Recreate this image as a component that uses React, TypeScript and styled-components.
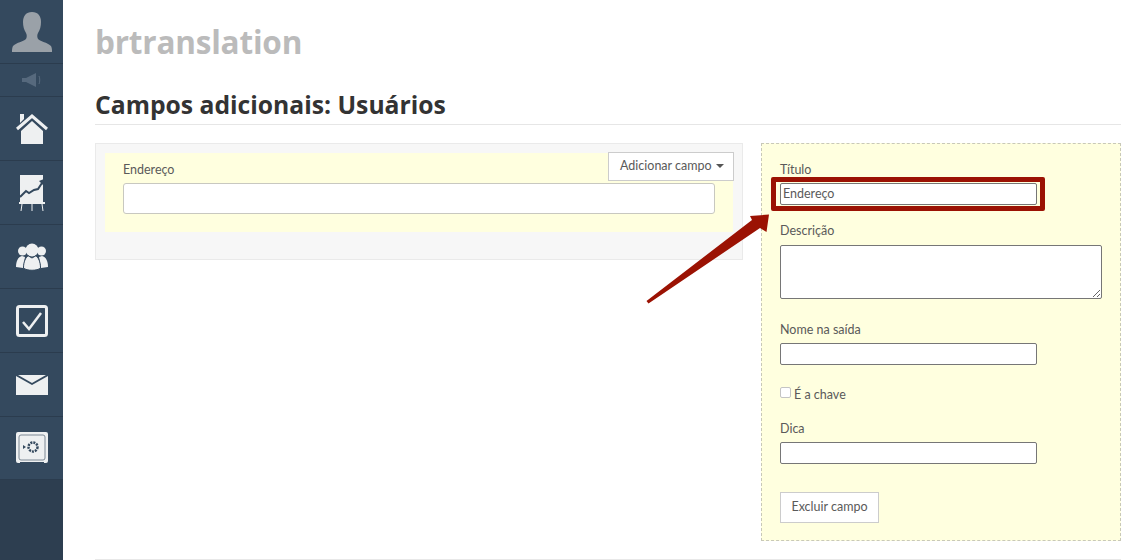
import React from 'react';
import styled, { createGlobalStyle } from 'styled-components';

const BODY_FONT = `12.5px Lato, "Liberation Sans", Arial, sans-serif`;

const GlobalStyle = createGlobalStyle`
  html, body {
    margin: 0;
    height: 100%;
    background: #fff;
    overflow: hidden;
  }
  * {
    box-sizing: border-box;
  }
  body {
    font: ${BODY_FONT};
    color: #5a5a5a;
  }
`;

const Page = styled.div`
  display: flex;
  position: relative;
  width: 1133px;
  height: 560px;
  overflow: hidden;
`;

const Sidebar = styled.aside`
  width: 63px;
  flex-shrink: 0;
  background: #2d3e50;
`;

const SideRow = styled.div<{ $height: number }>`
  display: flex;
  align-items: center;
  justify-content: center;
  height: ${({ $height }) => $height}px;
  background: #34495e;
  border-bottom: 1px solid #2b3c4e;
`;

const Main = styled.main`
  flex: 1;
  padding: 0 12px 0 32px;
`;

const Brand = styled.h1`
  margin: 0;
  padding-top: 22px;
  height: 78px;
  font-family: "Open Sans", "Liberation Sans", sans-serif;
  font-size: 31.5px;
  line-height: 39px;
  font-weight: 700;
  letter-spacing: -0.2px;
  color: #bbb;
`;

const TitleBar = styled.div`
  height: 47px;
  border-bottom: 1px solid #e6e6e6;
`;

const Title = styled.h2`
  margin: 0;
  padding-top: 13px;
  font-family: "Open Sans", "Liberation Sans", sans-serif;
  font-size: 24.7px;
  line-height: 27px;
  font-weight: 700;
  color: #333;
`;

const Columns = styled.div`
  display: flex;
  justify-content: space-between;
  align-items: flex-start;
  margin-top: 18px;
  height: 398px;
`;

const FormPreview = styled.section`
  position: relative;
  width: 648px;
  height: 117px;
  padding: 9px;
  background: #f7f7f7;
  border: 1px solid #eaeaea;
`;

const PreviewField = styled.div`
  height: 79px;
  padding: 7px 18px 0;
  background: #ffffdf;
`;

const Label = styled.label`
  display: block;
  height: 20px;
  line-height: 20px;
`;

const PreviewInput = styled.input`
  display: block;
  width: 592px;
  height: 31px;
  margin-top: 3px;
  background: #fff;
  border: 1px solid #c8c8c0;
  border-radius: 3px;
  outline: none;
`;

const AddButton = styled.button`
  position: absolute;
  top: 8px;
  right: 8px;
  display: flex;
  align-items: center;
  gap: 4px;
  width: 126px;
  height: 29px;
  padding: 0 0 2px 11px;
  font: ${BODY_FONT};
  color: #5a5a5a;
  background: #fff;
  border: 1px solid #ccc;
`;

const Caret = styled.span`
  width: 0;
  height: 0;
  border-top: 4px solid #555;
  border-left: 4px solid transparent;
  border-right: 4px solid transparent;
`;

const Editor = styled.section`
  width: 360px;
  height: 398px;
  padding: 16px 18px;
  background: #ffffdf;
  border: 1px dashed #c8c8b8;
`;

const EditorField = styled.div<{ $gap: number }>`
  margin-bottom: ${({ $gap }) => $gap}px;
`;

const TextInput = styled.input`
  display: block;
  width: 257px;
  height: 22px;
  margin-top: 3px;
  padding: 0 2px 2px;
  font: ${BODY_FONT};
  color: #5a5a5a;
  background: #fff;
  border: 1px solid #767676;
  border-radius: 2px;
  outline: none;
`;

const TextArea = styled.textarea`
  display: block;
  width: 322px;
  height: 54px;
  margin-top: 4px;
  background: #fff;
  border: 1px solid #767676;
  border-radius: 2px;
  outline: none;
`;

const CheckRow = styled.label`
  display: flex;
  align-items: center;
  gap: 3px;
  height: 20px;
`;

const CheckBox = styled.input`
  appearance: none;
  width: 11px;
  height: 11px;
  margin: -3px 0 0;
  background: #fff;
  border: 1px solid #c4c4c4;
  border-radius: 2px;
`;

const DeleteButton = styled.button`
  display: block;
  width: 99px;
  height: 31px;
  padding: 0 0 2px;
  font: ${BODY_FONT};
  color: #5a5a5a;
  background: #fff;
  border: 1px solid #ccc;
`;

const Highlight = styled.div`
  position: absolute;
  left: 771px;
  top: 177px;
  width: 274px;
  height: 34px;
  border: 5px solid #9b1203;
  border-radius: 2px;
  pointer-events: none;
`;

const Arrow = styled.svg`
  position: absolute;
  left: 640px;
  top: 205px;
  pointer-events: none;
`;

const FootLine = styled.div`
  position: absolute;
  left: 95px;
  right: 12px;
  bottom: 0;
  border-top: 1px solid #e8e8e8;
`;

const ICON = '#eef0f1';

const AvatarIcon = () => (
  <svg width="42" height="42" viewBox="0 0 42 42">
    <path
      fill="#9aa1a8"
      d="M21 1c-6 0-9 4-9 10 0 4 1 8 3 11 1 2 1 4 0 6-3 3-9 3-13 7-1 2-1 4-1 6h40c0-2 0-4-1-6-4-4-10-4-13-7-1-2-1-4 0-6 2-3 3-7 3-11 0-6-3-10-9-10z"
    />
  </svg>
);

const SpeakerIcon = () => (
  <svg width="22" height="14" viewBox="0 0 22 14">
    <path fill="#56697d" d="M1 5h4L15 0v14L5 9H1z" />
    <path fill="none" stroke="#56697d" d="M18 3c1 2 1 6 0 8" />
  </svg>
);

const HomeIcon = () => (
  <svg width="32" height="32" viewBox="0 0 32 32">
    <path fill={ICON} d="M4 1h4v5l-4 4zM5 18 16 8l11 10v13H5z" />
    <path fill="none" stroke={ICON} strokeWidth="3" d="M1 16 16 3l15 13" />
  </svg>
);

const ChartIcon = () => (
  <svg width="26" height="36" viewBox="0 0 26 36">
    <path fill={ICON} d="M1 0h23v27H1z" />
    <path fill="none" stroke="#34495e" strokeWidth="2" d="M1 22l6-6 3 2 5-3 4-1 4-6" />
    <path fill="#34495e" d="M20 6l5-2-1 6z" />
    <path fill={ICON} d="M0 27h26v2H0z" />
    <path stroke={ICON} d="M3 29 2 36M13 29v7M23 29l1 7" />
  </svg>
);

const UsersIcon = () => (
  <svg width="32" height="28" viewBox="0 0 32 28">
    <circle cx="16" cy="7" r="6.500" fill={ICON} />
    <circle cx="6.500" cy="8" r="4.500" fill={ICON} />
    <circle cx="25.500" cy="8" r="4.500" fill={ICON} />
    <path fill={ICON} d="M0 24c0-6 2-10 6-11l3 1-2 11zM32 24c0-6-2-10-6-11l-3 1 2 11z" />
    <path fill={ICON} stroke="#34495e" d="M7.500 25c0-6 2-11 5-12l3.500 2 3.500-2c3 1 5 6 5 12-3 3-14 3-17 0z" />
  </svg>
);

const CheckIcon = () => (
  <svg width="32" height="32" viewBox="0 0 32 32">
    <rect x="1.500" y="1.500" width="29" height="29" rx="2" fill="#34495e" stroke={ICON} strokeWidth="3" />
    <path fill="none" stroke={ICON} strokeWidth="2.500" d="M7 17l6 7 12-16" />
  </svg>
);

const MailIcon = () => (
  <svg width="32" height="20" viewBox="0 0 32 20">
    <path fill={ICON} d="M0 1l16 9 16-9v19H0z" />
    <path fill={ICON} d="M2 0h28L16 8z" />
  </svg>
);

const SafeIcon = () => (
  <svg width="32" height="32" viewBox="0 0 32 32">
    <path fill={ICON} d="M2 0h28a2 2 0 0 1 2 2v27a2 2 0 0 1-2 2h-2v-1H4v1H2a2 2 0 0 1-2-2V2a2 2 0 0 1 2-2z" />
    <rect x="3" y="3" width="26" height="25" rx="2" fill="none" stroke="#7c8894" />
    <circle cx="17" cy="15" r="4.500" fill="none" stroke="#34495e" strokeWidth="2.500" strokeDasharray="2 1" />
    <path fill="#34495e" d="M7 13l3 2-3 2z" />
  </svg>
);

const navRows = [
  { id: 'home', height: 64, icon: <HomeIcon /> },
  { id: 'chart', height: 64, icon: <ChartIcon /> },
  { id: 'users', height: 64, icon: <UsersIcon /> },
  { id: 'tasks', height: 64, icon: <CheckIcon /> },
  { id: 'mail', height: 64, icon: <MailIcon /> },
  { id: 'safe', height: 63, icon: <SafeIcon /> },
];

export default function App() {
  return (
    <Page>
      <GlobalStyle />
      <Sidebar>
        <SideRow $height={64}>
          <AvatarIcon />
        </SideRow>
        <SideRow $height={33}>
          <SpeakerIcon />
        </SideRow>
        {navRows.map((row) => (
          <SideRow key={row.id} $height={row.height}>
            {row.icon}
          </SideRow>
        ))}
      </Sidebar>

      <Main>
        <Brand>brtranslation</Brand>
        <TitleBar>
          <Title>Campos adicionais: Usuários</Title>
        </TitleBar>
        <Columns>
          <FormPreview>
            <PreviewField>
              <Label>Endereço</Label>
              <PreviewInput readOnly />
            </PreviewField>
            <AddButton>
              Adicionar campo <Caret />
            </AddButton>
          </FormPreview>

          <Editor>
            <EditorField $gap={16}>
              <Label>Título</Label>
              <TextInput readOnly value="Endereço" />
            </EditorField>
            <EditorField $gap={21}>
              <Label>Descrição</Label>
              <TextArea readOnly />
            </EditorField>
            <EditorField $gap={19}>
              <Label>Nome na saída</Label>
              <TextInput readOnly />
            </EditorField>
            <EditorField $gap={15}>
              <CheckRow>
                <CheckBox type="checkbox" readOnly />É a chave
              </CheckRow>
            </EditorField>
            <EditorField $gap={28}>
              <Label>Dica</Label>
              <TextInput readOnly />
            </EditorField>
            <DeleteButton>Excluir campo</DeleteButton>
          </Editor>
        </Columns>
      </Main>

      <Highlight />
      <Arrow width="135" height="105" viewBox="0 0 135 105">
        <path
          fill="#9b1203"
          d="M6.500 96 112 15 110 11 129 9.500 126.500 27 120 23 8.500 98.500z"
        />
      </Arrow>
      <FootLine />
    </Page>
  );
}
